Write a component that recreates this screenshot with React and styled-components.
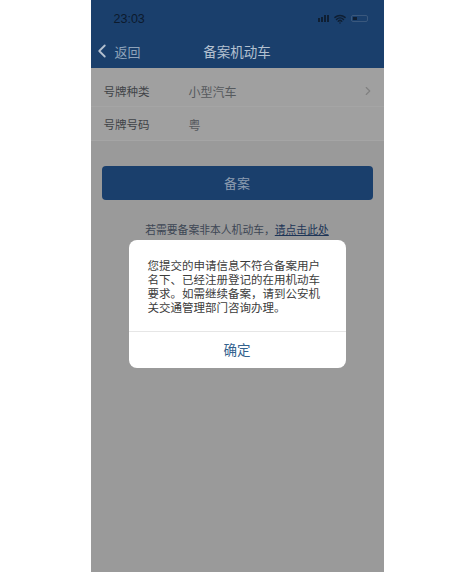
import styled, { createGlobalStyle } from 'styled-components';
import { ChevronLeft, ChevronRight, Wifi } from 'lucide-react';

const GlobalStyle = createGlobalStyle`
  html, body {
    margin: 0;
    padding: 0;
    background: #fff;
  }
  * {
    box-sizing: border-box;
  }
`;

const Page = styled.div`
  width: 475px;
  height: 572px;
  display: flex;
  justify-content: center;
  font-family: "Noto Sans CJK SC", "Liberation Sans", sans-serif;
`;

const Phone = styled.div`
  width: 293px;
  height: 572px;
  margin-right: 1px;
  background: #9a9a9a;
  position: relative;
  overflow: hidden;
`;

const Header = styled.header`
  height: 68px;
  background: #1a3f6c;
  display: flex;
  flex-direction: column;
`;

const StatusBar = styled.div`
  height: 36px;
  padding: 1px 16px 0 23px;
  display: flex;
  align-items: center;
  justify-content: space-between;
`;

const Time = styled.span`
  font-family: "Liberation Sans", sans-serif;
  font-size: 12.5px;
  color: #0c1a2c;
`;

const StatusIcons = styled.div`
  display: flex;
  align-items: center;
  gap: 5px;
  color: #0f1f33;
`;

const Signal = styled.div`
  display: flex;
  align-items: flex-end;
  gap: 1px;
`;

const SignalBar = styled.i`
  width: 2px;
  height: ${(p) => p.$h}px;
  background: #0f1f33;
`;

const Battery = styled.div`
  width: 17px;
  height: 7px;
  border: 1px solid #3a587d;
  border-radius: 2px;
  padding: 1px;
  display: flex;
`;

const BatteryLevel = styled.i`
  width: 4px;
  background: #0f1f33;
`;

const NavBar = styled.div`
  flex: 1;
  padding-bottom: 2px;
  display: grid;
  grid-template-columns: 1fr auto 1fr;
  align-items: center;
`;

const Back = styled.div`
  display: flex;
  align-items: center;
  gap: 2px;
  font-size: 13px;
  color: #8fa3ba;
`;

const Title = styled.div`
  font-size: 13.5px;
  color: #b4c1d0;
`;

const List = styled.div`
  background: #a0a0a0;
`;

const Row = styled.div`
  height: ${(p) => (p.$first ? 39 : 34)}px;
  padding: ${(p) => (p.$first ? 8 : 1)}px 9px 0 13px;
  display: flex;
  align-items: center;
  border-bottom: 1px solid #a5a5a5;
  color: #3f4347;
  font-size: 11.5px;
`;

const Label = styled.span`
  width: 85px;
`;

const Value = styled.span`
  flex: 1;
  font-size: 12px;
  color: #55595d;
`;

const Content = styled.div`
  padding: 25px 11px 0;
  display: flex;
  flex-direction: column;
  align-items: center;
`;

const SubmitButton = styled.button`
  width: 100%;
  height: 34px;
  border: none;
  border-radius: 4px;
  background: #1a3f6c;
  color: #8c9cb0;
  font-family: inherit;
  font-size: 13px;
  padding: 0 0 2px;
`;

const Hint = styled.p`
  margin: 21px 0 0;
  font-size: 10.8px;
  line-height: 16px;
  color: #3d4654;
  white-space: nowrap;
`;

const HintLink = styled.span`
  color: #1d3557;
  text-decoration: underline;
`;

const Dialog = styled.div`
  position: absolute;
  left: 38px;
  top: 240px;
  width: 217px;
  height: 128px;
  background: #fff;
  border-radius: 8px;
  display: flex;
  flex-direction: column;
`;

const Message = styled.div`
  height: 92px;
  padding: 18px 18px 0 19px;
  font-size: 11.5px;
  line-height: 14px;
  color: #3c3c3c;
  border-bottom: 1px solid #e6e6e6;
`;

const Confirm = styled.div`
  flex: 1;
  padding-bottom: 2px;
  display: flex;
  align-items: center;
  justify-content: center;
  font-size: 13.5px;
  color: #33628e;
`;

export default function App() {
  return (
    <Page>
      <GlobalStyle />
      <Phone>
        <Header>
          <StatusBar>
            <Time>23:03</Time>
            <StatusIcons>
              <Signal>
                <SignalBar $h={4} />
                <SignalBar $h={5} />
                <SignalBar $h={7} />
                <SignalBar $h={7} />
              </Signal>
              <Wifi size={12} strokeWidth={3} />
              <Battery>
                <BatteryLevel />
              </Battery>
            </StatusIcons>
          </StatusBar>
          <NavBar>
            <Back>
              <ChevronLeft size={22} strokeWidth={2} color="#b4c1d0" />
              返回
            </Back>
            <Title>备案机动车</Title>
          </NavBar>
        </Header>
        <List>
          <Row $first>
            <Label>号牌种类</Label>
            <Value>小型汽车</Value>
            <ChevronRight size={14} color="#808080" />
          </Row>
          <Row>
            <Label>号牌号码</Label>
            <Value>粤</Value>
          </Row>
        </List>
        <Content>
          <SubmitButton>备案</SubmitButton>
          <Hint>
            若需要备案非本人机动车，<HintLink>请点击此处</HintLink>
          </Hint>
        </Content>
        <Dialog>
          <Message>
            您提交的申请信息不符合备案用户名下、已经注册登记的在用机动车要求。如需继续备案，请到公安机关交通管理部门咨询办理。
          </Message>
          <Confirm>确定</Confirm>
        </Dialog>
      </Phone>
    </Page>
  );
}
